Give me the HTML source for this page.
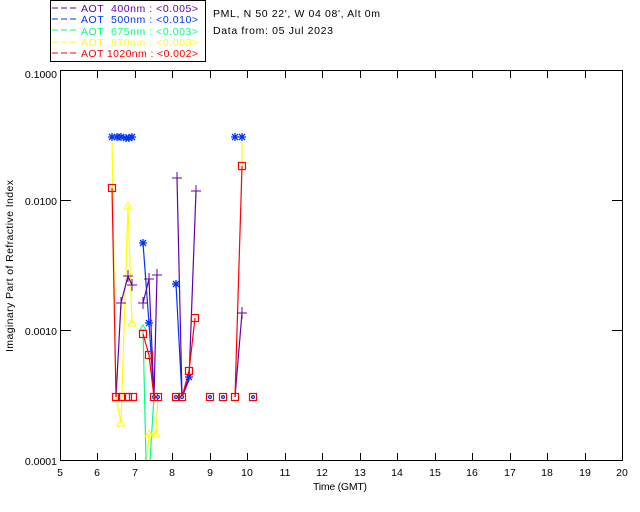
<!DOCTYPE html>
<html><head><meta charset="utf-8"><style>
html,body{margin:0;padding:0;background:#fff;width:640px;height:512px;overflow:hidden}
svg{display:block}
text{font-family:"Liberation Sans",sans-serif;font-size:10.5px;fill:#000}
</style></head><body>
<svg width="640" height="512" viewBox="0 0 640 512" xmlns="http://www.w3.org/2000/svg">
<defs>
<g id="st"><path d="M-4 0H4M0 -4V4M-3 -3L3 3M-3 3L3 -3" stroke="#0033ff" stroke-width="1.3"/></g>
<g id="cr"><path d="M-5 0H5M0 -6V6" stroke="#6600aa" stroke-width="1"/></g>
<g id="sq"><rect x="-3.5" y="-3.5" width="7" height="7" fill="none" stroke="#ff0000" stroke-width="1.2"/></g>
<g id="tr"><path d="M0 -4L4 3H-4Z" fill="none" stroke="#ffff00" stroke-width="1"/></g>
<g id="pt"><rect x="-3.5" y="-3.5" width="7" height="7" fill="none" stroke="#ff0000" stroke-width="1.2"/><circle r="2" fill="#0033ff"/><path d="M-1 0H1" stroke="#ffff00"/></g>
</defs>
<rect x="50.5" y="0.5" width="155" height="61" fill="none" stroke="#000"/>
<g stroke-width="1" stroke-dasharray="6,3">
<path d="M52 8H76" stroke="#6600aa"/><path d="M52 19H76" stroke="#0033ff"/><path d="M52 30H76" stroke="#00ff88"/><path d="M52 42H76" stroke="#ffff00"/><path d="M52 53H76" stroke="#ff0000"/>
</g>
<text x="81" y="12" textLength="117" lengthAdjust="spacing" style="fill:#6600aa" xml:space="preserve">AOT  400nm : &lt;0.005&gt;</text>
<text x="81" y="23" textLength="117" lengthAdjust="spacing" style="fill:#0033ff" xml:space="preserve">AOT  500nm : &lt;0.010&gt;</text>
<text x="81" y="35" textLength="117" lengthAdjust="spacing" style="fill:#00ff88" xml:space="preserve">AOT  675nm : &lt;0.003&gt;</text>
<text x="81" y="46" textLength="117" lengthAdjust="spacing" style="fill:#ffff00" xml:space="preserve">AOT  870nm : &lt;0.003&gt;</text>
<text x="81" y="57" textLength="117" lengthAdjust="spacing" style="fill:#ff0000">AOT 1020nm : &lt;0.002&gt;</text>
<text x="213" y="17" textLength="167" lengthAdjust="spacing">PML, N 50 22', W 04 08', Alt 0m</text>
<text x="213" y="34" textLength="120" lengthAdjust="spacing">Data from: 05 Jul 2023</text>
<rect x="60.5" y="70.5" width="562" height="390" fill="none" stroke="#000"/>
<g stroke="#000">
<path d="M97.5 461V453M135.5 461V453M172.5 461V453M210.5 461V453M247.5 461V453M285.5 461V453M322.5 461V453M360.5 461V453M397.5 461V453M435.5 461V453M472.5 461V453M510.5 461V453M547.5 461V453M585.5 461V453"/>
<path d="M97.5 71V78M135.5 71V78M172.5 71V78M210.5 71V78M247.5 71V78M285.5 71V78M322.5 71V78M360.5 71V78M397.5 71V78M435.5 71V78M472.5 71V78M510.5 71V78M547.5 71V78M585.5 71V78"/>
<path d="M61 200.5H71M61 330.5H71M622 200.5H612M622 330.5H612"/>
</g>
<g text-anchor="middle">
<text x="60" y="476">5</text><text x="97" y="476">6</text><text x="135" y="476">7</text><text x="172" y="476">8</text><text x="210" y="476">9</text><text x="247" y="476">10</text><text x="285" y="476">11</text><text x="322" y="476">12</text><text x="360" y="476">13</text><text x="397" y="476">14</text><text x="435" y="476">15</text><text x="472" y="476">16</text><text x="510" y="476">17</text><text x="547" y="476">18</text><text x="585" y="476">19</text><text x="622" y="476">20</text>
</g>
<text x="313" y="490" textLength="54" lengthAdjust="spacing">Time (GMT)</text>
<g text-anchor="end">
<text x="57" y="78">0.1000</text><text x="57" y="205">0.0100</text><text x="57" y="335">0.0010</text><text x="57" y="465">0.0001</text>
</g>
<text transform="translate(13,352) rotate(-90)" textLength="172" lengthAdjust="spacing">Imaginary Part of Refractive Index</text>
<g fill="none" stroke-width="1.2">
<polyline stroke="#00ff88" points="143,329 146,460"/><polyline stroke="#00ff88" points="150,460 154,397"/>
<polyline stroke="#ffff00" points="112,137 116,397 121,423 128,206 132,323"/>
<polyline stroke="#ffff00" points="147,460 149,434 156,434 158,397"/>
<polyline stroke="#ffff00" points="242,137 242,166"/>
<polyline stroke="#0033ff" points="143,243 149,323 154,397"/>
<polyline stroke="#0033ff" points="176,284 182,397 189,377"/>
<polyline stroke="#6600aa" points="116,397 121,303 128,276 132,285"/>
<polyline stroke="#6600aa" points="143,303 149,279 154,397 157,275"/>
<polyline stroke="#6600aa" points="177,178 182,397 189,380 196,191"/>
<polyline stroke="#6600aa" points="235,397 242,313"/>
<polyline stroke="#ff0000" points="112,188 116,397"/>
<polyline stroke="#ff0000" points="143,334 149,355 154,397"/>
<polyline stroke="#ff0000" points="182,397 189,371 195,318"/>
<polyline stroke="#ff0000" points="235,397 242,166"/>
</g>
<use href="#st" x="112" y="137"/><use href="#st" x="117" y="137"/><use href="#st" x="121" y="137"/><use href="#st" x="126" y="138"/><use href="#st" x="129" y="138"/><use href="#st" x="132" y="137"/>
<use href="#st" x="235" y="137"/><use href="#st" x="242" y="137"/>
<use href="#st" x="143" y="243"/><use href="#st" x="176" y="284"/><use href="#st" x="149" y="323"/><use href="#st" x="189" y="377"/>
<use href="#cr" x="177" y="178"/><use href="#cr" x="196" y="191"/><use href="#cr" x="128" y="276"/><use href="#cr" x="121" y="303"/><use href="#cr" x="132" y="285"/><use href="#cr" x="143" y="303"/><use href="#cr" x="149" y="279"/><use href="#cr" x="157" y="275"/><use href="#cr" x="242" y="313"/>
<use href="#tr" x="128" y="206"/><use href="#tr" x="132" y="323"/><use href="#tr" x="121" y="423"/><use href="#tr" x="149" y="434"/><use href="#tr" x="156" y="434"/>
<path d="M143 325L146 330H140Z" fill="none" stroke="#00ff88"/>
<use href="#sq" x="112" y="188"/><use href="#sq" x="242" y="166"/><use href="#sq" x="143" y="334"/><use href="#sq" x="149" y="355"/><use href="#sq" x="195" y="318"/><use href="#sq" x="189" y="371"/>
<use href="#sq" x="116" y="397"/><use href="#sq" x="122" y="397"/><use href="#sq" x="128" y="397"/><use href="#sq" x="133" y="397"/>
<use href="#pt" x="154" y="397"/><use href="#pt" x="158" y="397"/><use href="#pt" x="176" y="397"/><use href="#pt" x="182" y="397"/><use href="#pt" x="210" y="397"/><use href="#pt" x="223" y="397"/><use href="#sq" x="235" y="397"/><use href="#pt" x="253" y="397"/>
</svg>
</body></html>
